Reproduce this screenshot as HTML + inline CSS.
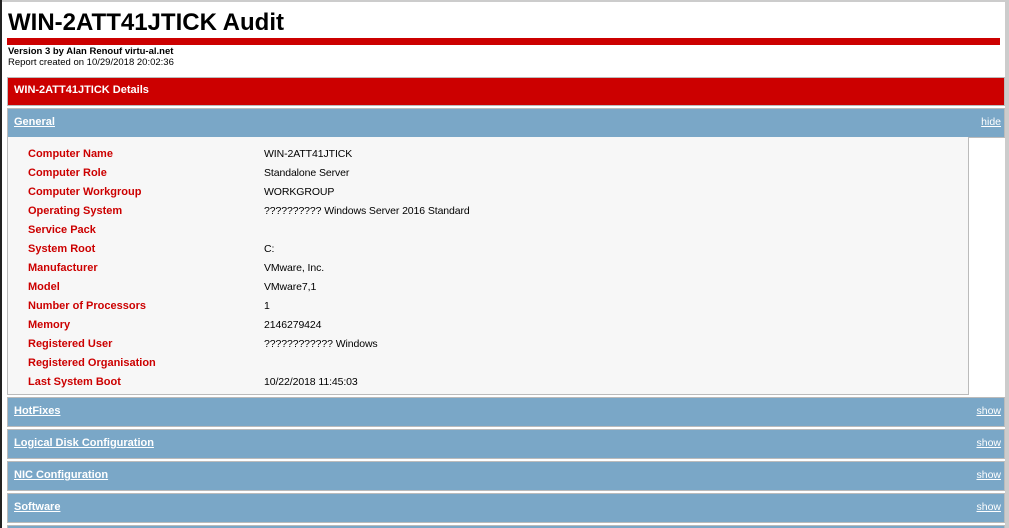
<!DOCTYPE html>
<html style="overflow:hidden;height:528px"><head><style>
body{margin:0;width:1009px;height:528px;overflow:hidden;background:#fff;font-family:"Liberation Sans",Arial,sans-serif;position:relative}
.lb{position:absolute;left:0;top:0;width:2px;height:528px;background:#222}
.tb{position:absolute;left:0;top:0;width:1009px;height:2px;background:#ccc}
.rb{position:absolute;left:1005px;top:0;width:4px;height:528px;background:#ccc}
h1{position:absolute;left:8px;top:9px;margin:0;font-size:24px;font-weight:bold;color:#000;line-height:28px}
.red{position:absolute;left:7px;top:38px;width:993px;height:7px;background:#c00}
.v{position:absolute;left:8px;top:46px;font-size:9.5px;line-height:11px;color:#000}
.hdr{position:absolute;left:7px;top:77px;width:996px;height:27px;background:#c00;border:1px solid #bbb}
.hdr span{position:absolute;left:6px;top:6px;color:#fff;font-weight:bold;font-size:11px}
.bar{position:absolute;left:7px;width:996px;height:28px;background:#7aa7c7;border:1px solid #bbb}
.bar a{position:absolute;left:6px;top:7px;color:#fff;font-weight:bold;font-size:11px;text-decoration:underline}
.bar b{position:absolute;right:3px;top:7px;color:#fff;font-weight:normal;font-size:10.5px;text-decoration:underline}
.box{position:absolute;left:7px;top:137px;width:960px;height:257px;background:#f7f7f7;border:1px solid #bbb;border-top:none}
.row{position:absolute;left:20px;font-size:11px;line-height:14px}
.row .k{position:absolute;left:0;color:#c00;font-weight:bold;white-space:nowrap}
.row .val{position:absolute;left:236px;color:#000;white-space:nowrap;font-size:10.5px;letter-spacing:-0.1px}
</style></head><body>
<div class="tb"></div><div class="lb"></div><div class="rb"></div>
<h1>WIN-2ATT41JTICK Audit</h1>
<div class="red"></div>
<div class="v"><b>Version 3 by Alan Renouf virtu-al.net</b><br>Report created on 10/29/2018 20:02:36</div>
<div class="hdr"><span>WIN-2ATT41JTICK Details</span></div>
<div class="bar" style="top:108px"><a>General</a><b>hide</b></div>
<div class="box">
<div class="row" style="top:10px"><span class="k">Computer Name</span><span class="val">WIN-2ATT41JTICK</span></div>
<div class="row" style="top:29px"><span class="k">Computer Role</span><span class="val">Standalone Server</span></div>
<div class="row" style="top:48px"><span class="k">Computer Workgroup</span><span class="val">WORKGROUP</span></div>
<div class="row" style="top:67px"><span class="k">Operating System</span><span class="val">?????????? Windows Server 2016 Standard</span></div>
<div class="row" style="top:86px"><span class="k">Service Pack</span><span class="val"></span></div>
<div class="row" style="top:105px"><span class="k">System Root</span><span class="val">C:</span></div>
<div class="row" style="top:124px"><span class="k">Manufacturer</span><span class="val">VMware, Inc.</span></div>
<div class="row" style="top:143px"><span class="k">Model</span><span class="val">VMware7,1</span></div>
<div class="row" style="top:162px"><span class="k">Number of Processors</span><span class="val">1</span></div>
<div class="row" style="top:181px"><span class="k">Memory</span><span class="val">2146279424</span></div>
<div class="row" style="top:200px"><span class="k">Registered User</span><span class="val">???????????? Windows</span></div>
<div class="row" style="top:219px"><span class="k">Registered Organisation</span><span class="val"></span></div>
<div class="row" style="top:238px"><span class="k">Last System Boot</span><span class="val">10/22/2018 11:45:03</span></div>
</div>
<div class="bar" style="top:397px"><a>HotFixes</a><b>show</b></div>
<div class="bar" style="top:429px"><a>Logical Disk Configuration</a><b>show</b></div>
<div class="bar" style="top:461px"><a>NIC Configuration</a><b>show</b></div>
<div class="bar" style="top:493px"><a>Software</a><b>show</b></div>
<div class="bar" style="top:525px;height:2px;border-bottom:none"></div>
</body></html>
